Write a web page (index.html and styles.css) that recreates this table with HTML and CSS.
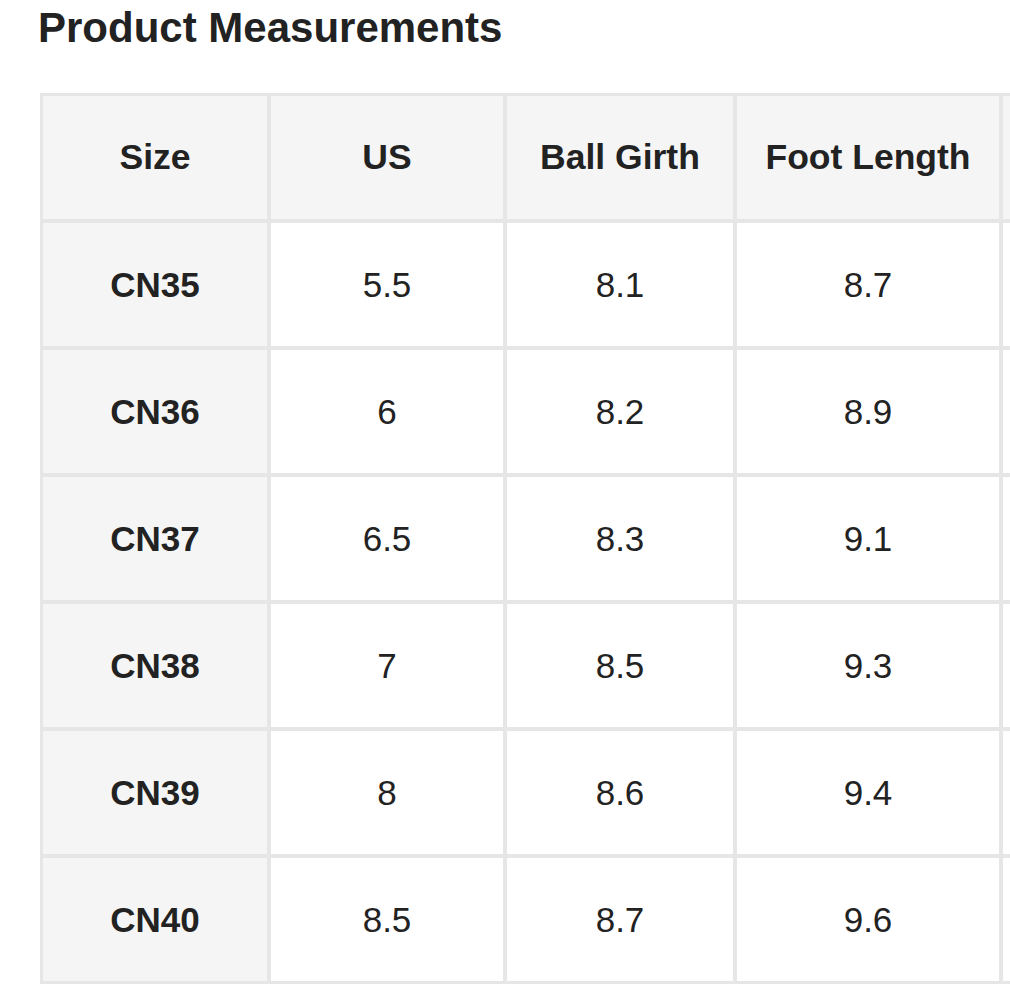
FILE: index.html
```html
<!DOCTYPE html>
<html lang="en">
<head>
<meta charset="utf-8">
<title>Product Measurements</title>
<link rel="stylesheet" href="styles.css">
</head>
<body>
<main class="page">
  <h1 class="title">Product Measurements</h1>
  <div class="table-wrap">
    <table class="sizes">
      <thead>
        <tr>
          <th class="c1">Size</th>
          <th class="c2">US</th>
          <th class="c3">Ball Girth</th>
          <th class="c4">Foot Length</th>
          <th class="c5"></th>
        </tr>
      </thead>
      <tbody>
        <tr><th>CN35</th><td>5.5</td><td>8.1</td><td>8.7</td><td></td></tr>
        <tr><th>CN36</th><td>6</td><td>8.2</td><td>8.9</td><td></td></tr>
        <tr><th>CN37</th><td>6.5</td><td>8.3</td><td>9.1</td><td></td></tr>
        <tr><th>CN38</th><td>7</td><td>8.5</td><td>9.3</td><td></td></tr>
        <tr><th>CN39</th><td>8</td><td>8.6</td><td>9.4</td><td></td></tr>
        <tr><th>CN40</th><td>8.5</td><td>8.7</td><td>9.6</td><td></td></tr>
      </tbody>
    </table>
  </div>
</main>
</body>
</html>
```

FILE: styles.css
```css
html, body {
  margin: 0;
  padding: 0;
  background: #ffffff;
  overflow: hidden;
}

.page {
  padding: 4px 0 0 40px;
  font-family: "Liberation Sans", Arial, sans-serif;
  color: #222222;
}

.title {
  margin: 0 0 0 -2px;
  font-size: 42px;
  line-height: 48px;
  font-weight: bold;
  color: #222222;
}

.table-wrap {
  margin-top: 41px;
  width: 970px;
  overflow: hidden;
}

.sizes {
  table-layout: fixed;
  border-collapse: separate;
  border-spacing: 0;
  border: 1px solid #e6e6e6;
  width: 1192px;
}

.sizes th,
.sizes td {
  box-sizing: border-box;
  border: 2px solid #e6e6e6;
  padding: 41px 0;
  line-height: 41px;
  font-size: 35px;
  text-align: center;
  vertical-align: middle;
  color: #222222;
}

.sizes th {
  font-weight: bold;
  background: #f5f5f5;
}

.sizes td {
  font-weight: normal;
  background: #ffffff;
}

.sizes thead th {
  font-size: 35.5px;
}

.c1 { width: 228px; }
.c2 { width: 236px; }
.c3 { width: 230px; }
.c4 { width: 266px; }
.c5 { width: 230px; }
```
